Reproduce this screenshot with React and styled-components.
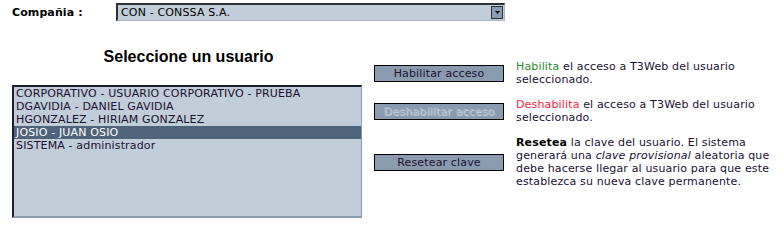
import React from "react"
import styled, { createGlobalStyle } from "styled-components"

const GlobalStyle = createGlobalStyle`
body {
  margin: 0;
  background: #ffffff;
  font-family: "DejaVu Sans", Verdana, sans-serif;
  font-size: 11px;
  color: #000000;
}
`

const Page = styled.div`
padding: 3px 0 0 12px;
width: 770px;
`

const CompanyRow = styled.div`
display: flex;
align-items: center;
height: 18px;
`

const Label = styled.div`
width: 104px;
font-weight: bold;
letter-spacing: 0.1px;
`

const SelectBox = styled.div`
width: 389px;
height: 18px;
box-sizing: border-box;
display: flex;
align-items: center;
justify-content: space-between;
background-color: #c1cdd9;
border-top: 2px solid #2b2f38;
border-left: 2px solid #2b2f38;
border-right: 1px solid #a9b6c4;
border-bottom: 1px solid #a9b6c4;
padding-left: 3px;
letter-spacing: 0.15px;
`

const ArrowBox = styled.div`
width: 12px;
height: 13px;
margin-right: 1px;
box-sizing: border-box;
background-color: #8a9bb0;
border: 1px solid #2b2f38;
display: flex;
align-items: center;
justify-content: center;
`

const Main = styled.div`
display: flex;
margin-top: 27px;
`

const LeftColumn = styled.div`
width: 350px;
display: flex;
flex-direction: column;
`

const Title = styled.h1`
margin: 0 0 19px 0;
font-family: "Liberation Sans", Arial, sans-serif;
font-size: 16px;
line-height: 18px;
font-weight: bold;
text-align: center;
padding-left: 3px;
`

const UserList = styled.ul`
list-style: none;
margin: 0;
padding: 0;
height: 133px;
box-sizing: border-box;
background-color: #c1cdd9;
border-top: 2px solid #1c202a;
border-left: 2px solid #1c202a;
border-right: 1px solid #8a9bb0;
border-bottom: 2px solid #8a9bb0;
overflow: hidden;
`

const UserItem = styled.li`
height: 13px;
line-height: 13px;
padding-left: 2px;
white-space: nowrap;
letter-spacing: 0.15px;
background-color: ${p => (p.selected ? "#4f637a" : "transparent")};
color: ${p => (p.selected ? "#ffffff" : "#1a1030")};
`

const RightColumn = styled.div`
margin-left: 12px;
padding-top: 12px;
display: flex;
flex-direction: column;
gap: 12px;
`

const ActionRow = styled.div`
display: flex;
align-items: center;
gap: 12px;
`

const ActionButton = styled.button`
width: 130px;
height: 17px;
flex-shrink: 0;
padding: 0;
margin: 0;
background-color: #8a9bb0;
border: 1px solid #000000;
font-family: "DejaVu Sans", Verdana, sans-serif;
font-size: 11px;
letter-spacing: 0.15px;
line-height: 15px;
color: ${p => (p.disabled ? "#a9b6c5" : "#1a1030")};
text-shadow: ${p => (p.disabled ? "1px 1px 0 #c4cfda" : "none")};
`

const Description = styled.p`
margin: 0;
width: 262px;
line-height: 13px;
letter-spacing: 0.15px;
color: #1a1030;
`

const Highlight = styled.span`
color: ${p => p.color};
font-weight: ${p => (p.bold ? "bold" : "normal")};
`

const users = [
  "CORPORATIVO - USUARIO CORPORATIVO - PRUEBA",
  "DGAVIDIA - DANIEL GAVIDIA",
  "HGONZALEZ - HIRIAM GONZALEZ",
  "JOSIO - JUAN OSIO",
  "SISTEMA - administrador",
]

const App = () => {
  return (
    <Page>
      <GlobalStyle />
      <CompanyRow>
        <Label>Compañia :</Label>
        <SelectBox>
          <span>CON - CONSSA S.A.</span>
          <ArrowBox>
            <svg width="5" height="3" viewBox="0 0 5 3">
              <path d="M0 0h5L2.5 3z" fill="#000" />
            </svg>
          </ArrowBox>
        </SelectBox>
      </CompanyRow>
      <Main>
        <LeftColumn>
          <Title>Seleccione un usuario</Title>
          <UserList>
            {users.map(u => (
              <UserItem key={u} selected={u.startsWith("JOSIO")}>{u}</UserItem>
            ))}
          </UserList>
        </LeftColumn>
        <RightColumn>
          <ActionRow>
            <ActionButton>Habilitar acceso</ActionButton>
            <Description>
              <Highlight color="#2e8b2e">Habilita</Highlight> el acceso a T3Web del usuario seleccionado.
            </Description>
          </ActionRow>
          <ActionRow>
            <ActionButton disabled>Deshabilitar acceso</ActionButton>
            <Description>
              <Highlight color="#ff1a3c">Deshabilita</Highlight> el acceso a T3Web del usuario seleccionado.
            </Description>
          </ActionRow>
          <ActionRow>
            <ActionButton>Resetear clave</ActionButton>
            <Description>
              <Highlight color="#000" bold>Resetea</Highlight> la clave del usuario. El sistema generará una <em>clave provisional</em> aleatoria que debe hacerse llegar al usuario para que este establezca su nueva clave permanente.
            </Description>
          </ActionRow>
        </RightColumn>
      </Main>
    </Page>
  )
}

export default App
